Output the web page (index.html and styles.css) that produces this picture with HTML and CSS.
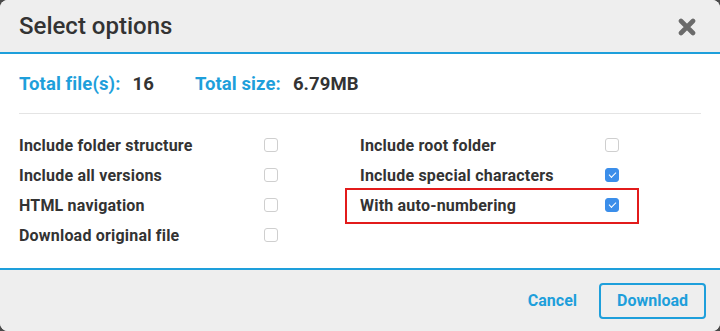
FILE: index.html
```html
<!DOCTYPE html>
<html lang="en">
<head>
    <meta charset="UTF-8">
    <title>Select options</title>
    <link rel="stylesheet" href="styles.css">
</head>
<body>
<div class="dialog">
    <div class="head">
        <span class="title">Select options</span>
        <svg class="close" width="18" height="18" viewBox="0 0 18 18">
            <path d="M3 3 L15 15 M15 3 L3 15" stroke="#6b6b6b" stroke-width="4.6" stroke-linecap="round"/>
        </svg>
    </div>
    <div class="body">
        <div class="totals">
            <span class="key">Total file(s):</span><span class="val">16</span>
            <span class="key second">Total size:</span><span class="val">6.79MB</span>
        </div>
        <div class="options">
            <div class="opt"><span class="label">Include folder structure</span><span class="box"></span></div>
            <div class="opt"><span class="label">Include root folder</span><span class="box"></span></div>
            <div class="opt"><span class="label">Include all versions</span><span class="box"></span></div>
            <div class="opt"><span class="label">Include special characters</span><span class="box on"></span></div>
            <div class="opt"><span class="label">HTML navigation</span><span class="box"></span></div>
            <div class="opt mark"><span class="label">With auto-numbering</span><span class="box on"></span></div>
            <div class="opt"><span class="label">Download original file</span><span class="box"></span></div>
        </div>
    </div>
    <div class="foot">
        <span class="cancel">Cancel</span>
        <span class="download">Download</span>
    </div>
</div>
</body>
</html>
```
FILE: styles.css
```css
html, body{
    margin: 0;
    padding: 0;
    background: #4a4a4a;
}
.dialog{
    width: 720px;
    height: 331px;
    display: flex;
    flex-direction: column;
    background: #fff;
    border-radius: 8px;
    overflow: hidden;
    font-family: Roboto, "Liberation Sans", sans-serif;
    color: #333;
}
.head{
    height: 52px;
    background: #eee;
    border-bottom: 2px solid #1e9fdb;
    display: flex;
    align-items: center;
    justify-content: space-between;
    padding: 0 24px 0 19px;
}
.title{
    font-size: 24px;
    font-weight: 500;
    color: #333;
}
.close{
    margin-top: 2px;
}
.body{
    flex: 1;
    padding: 0 19px;
}
.totals{
    height: 59px;
    border-bottom: 1px solid #e4e4e4;
    display: flex;
    align-items: center;
    font-size: 18.5px;
    font-weight: 700;
    letter-spacing: 0.1px;
}
.key{
    color: #1e9fdb;
}
.val{
    margin-left: 12px;
    color: #333;
}
.second{
    margin-left: 41px;
}
.options{
    display: grid;
    grid-template-columns: 341px auto;
    grid-auto-rows: 30px;
    margin-top: 16px;
}
.opt{
    display: flex;
    align-items: center;
    position: relative;
    font-size: 16px;
    font-weight: 700;
    letter-spacing: 0.2px;
}
.label{
    width: 245px;
}
.box{
    width: 12px;
    height: 12px;
    border: 1px solid #cfcfcf;
    border-radius: 3px;
    background: #fff;
    display: flex;
    align-items: center;
    justify-content: center;
}
.box.on{
    background: #3b8eea;
    border-color: #3b8eea;
}
.box.on::before{
    content: "";
    width: 6px;
    height: 3px;
    border-left: 1.6px solid #fff;
    border-bottom: 1.6px solid #fff;
    transform: rotate(-45deg);
    margin-top: -2px;
}
.mark::after{
    content: "";
    position: absolute;
    top: -2px;
    bottom: -4px;
    left: -15px;
    width: 290px;
    border: 2px solid #e21b1b;
}
.foot{
    height: 61px;
    background: #eee;
    border-top: 2px solid #1e9fdb;
    display: flex;
    align-items: center;
    justify-content: flex-end;
    padding-right: 14px;
    font-size: 16px;
    font-weight: 700;
    color: #1e9fdb;
}
.cancel{
    margin-right: 22px;
}
.download{
    height: 32px;
    line-height: 32px;
    padding: 0 16px;
    border: 2px solid #1e9fdb;
    border-radius: 4px;
}
```
